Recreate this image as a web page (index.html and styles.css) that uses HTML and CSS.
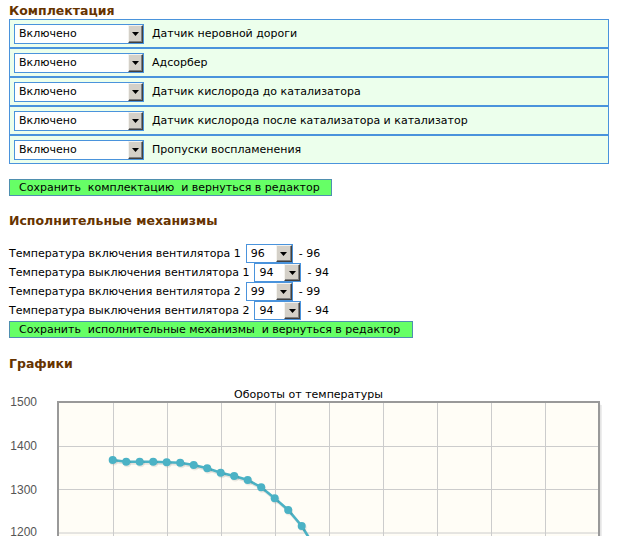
FILE: index.html
```html
<!DOCTYPE html>
<html lang="ru">
<head>
<meta charset="utf-8">
<title>Комплектация</title>
<link rel="stylesheet" href="styles.css">
</head>
<body>
<div class="page">
  <h2 class="heading">Комплектация</h2>
  <div class="kit">
    <div class="kit-row">
      <span class="sel sel-wide"><span class="sel-val">Включено</span><span class="sel-btn"><svg width="7" height="4" viewBox="0 0 7 4"><path d="M0 0H7L3.5 4Z" fill="#000"/></svg></span></span>
      <span class="kit-label">Датчик неровной дороги</span>
    </div>
    <div class="kit-row">
      <span class="sel sel-wide"><span class="sel-val">Включено</span><span class="sel-btn"><svg width="7" height="4" viewBox="0 0 7 4"><path d="M0 0H7L3.5 4Z" fill="#000"/></svg></span></span>
      <span class="kit-label">Адсорбер</span>
    </div>
    <div class="kit-row">
      <span class="sel sel-wide"><span class="sel-val">Включено</span><span class="sel-btn"><svg width="7" height="4" viewBox="0 0 7 4"><path d="M0 0H7L3.5 4Z" fill="#000"/></svg></span></span>
      <span class="kit-label">Датчик кислорода до катализатора</span>
    </div>
    <div class="kit-row">
      <span class="sel sel-wide"><span class="sel-val">Включено</span><span class="sel-btn"><svg width="7" height="4" viewBox="0 0 7 4"><path d="M0 0H7L3.5 4Z" fill="#000"/></svg></span></span>
      <span class="kit-label">Датчик кислорода после катализатора и катализатор</span>
    </div>
    <div class="kit-row">
      <span class="sel sel-wide"><span class="sel-val">Включено</span><span class="sel-btn"><svg width="7" height="4" viewBox="0 0 7 4"><path d="M0 0H7L3.5 4Z" fill="#000"/></svg></span></span>
      <span class="kit-label">Пропуски воспламенения</span>
    </div>
  </div>
  <button class="btn btn-kit" type="button">Сохранить&nbsp; комплектацию&nbsp; и вернуться в редактор</button>

  <h2 class="heading heading-mech">Исполнительные механизмы</h2>
  <div class="mech">
    <div class="mech-row"><span class="mech-label">Температура включения вентилятора 1</span><span class="sel sel-small"><span class="sel-val">96</span><span class="sel-btn"><svg width="7" height="4" viewBox="0 0 7 4"><path d="M0 0H7L3.5 4Z" fill="#000"/></svg></span></span><span class="mech-val">- 96</span></div>
    <div class="mech-row"><span class="mech-label">Температура выключения вентилятора 1</span><span class="sel sel-small"><span class="sel-val">94</span><span class="sel-btn"><svg width="7" height="4" viewBox="0 0 7 4"><path d="M0 0H7L3.5 4Z" fill="#000"/></svg></span></span><span class="mech-val">- 94</span></div>
    <div class="mech-row"><span class="mech-label">Температура включения вентилятора 2</span><span class="sel sel-small"><span class="sel-val">99</span><span class="sel-btn"><svg width="7" height="4" viewBox="0 0 7 4"><path d="M0 0H7L3.5 4Z" fill="#000"/></svg></span></span><span class="mech-val">- 99</span></div>
    <div class="mech-row"><span class="mech-label">Температура выключения вентилятора 2</span><span class="sel sel-small"><span class="sel-val">94</span><span class="sel-btn"><svg width="7" height="4" viewBox="0 0 7 4"><path d="M0 0H7L3.5 4Z" fill="#000"/></svg></span></span><span class="mech-val">- 94</span></div>
  </div>
  <button class="btn btn-mech" type="button">Сохранить&nbsp; исполнительные механизмы&nbsp; и вернуться в редактор</button>

  <h2 class="heading heading-graph">Графики</h2>
  <svg class="chart" width="608" height="151" viewBox="0 0 608 151">
    <text class="chart-title" x="299.5" y="13" text-anchor="middle">Обороты от температуры</text>
    <rect x="52" y="20" width="541" height="200" fill="#000" opacity="0.07"/>
    <rect x="50.5" y="18.5" width="541" height="200" fill="#000" opacity="0.07"/>
    <rect x="49" y="17" width="541" height="200" fill="#fffdf6"/>
    <g stroke="#cccccc" stroke-width="1">
      <path d="M49 61.5H590M49 104.5H590M49 148H590"/>
      <path d="M104.5 17V220M158.5 17V220M212.5 17V220M266.5 17V220M320.5 17V220M374.5 17V220M428.5 17V220M482.5 17V220M536.5 17V220"/>
    </g>
    <rect x="49" y="17" width="541" height="200" fill="none" stroke="#999999" stroke-width="2"/>
    <g class="axis" text-anchor="end">
      <text x="28" y="21">1500</text>
      <text x="28" y="65">1400</text>
      <text x="28" y="109">1300</text>
      <text x="28" y="151">1200</text>
    </g>
    <polyline fill="none" stroke="#000" stroke-opacity="0.1" stroke-width="3" transform="translate(1,1.5)" points="103.7,75 117.2,76.7 130.7,76.7 144.2,76.7 157.7,77.3 171.2,77.7 184.7,80 198.2,83.3 211.7,87.7 225.2,91 238.7,95 252.2,102.3 265.7,113.3 279.2,125 292.7,141 306.2,163"/>
    <polyline fill="none" stroke="#4bb2c5" stroke-width="2.5" points="103.7,75 117.2,76.7 130.7,76.7 144.2,76.7 157.7,77.3 171.2,77.7 184.7,80 198.2,83.3 211.7,87.7 225.2,91 238.7,95 252.2,102.3 265.7,113.3 279.2,125 292.7,141 306.2,163"/>
    <g fill="#000" fill-opacity="0.08" transform="translate(1,1.5)">
      <circle cx="103.7" cy="75" r="4"/><circle cx="117.2" cy="76.7" r="4"/><circle cx="130.7" cy="76.7" r="4"/><circle cx="144.2" cy="76.7" r="4"/><circle cx="157.7" cy="77.3" r="4"/><circle cx="171.2" cy="77.7" r="4"/><circle cx="184.7" cy="80" r="4"/><circle cx="198.2" cy="83.3" r="4"/><circle cx="211.7" cy="87.7" r="4"/><circle cx="225.2" cy="91" r="4"/><circle cx="238.7" cy="95" r="4"/><circle cx="252.2" cy="102.3" r="4"/><circle cx="265.7" cy="113.3" r="4"/><circle cx="279.2" cy="125" r="4"/><circle cx="292.7" cy="141" r="4"/>
    </g>
    <g fill="#4bb2c5">
      <circle cx="103.7" cy="75" r="4"/><circle cx="117.2" cy="76.7" r="4"/><circle cx="130.7" cy="76.7" r="4"/><circle cx="144.2" cy="76.7" r="4"/><circle cx="157.7" cy="77.3" r="4"/><circle cx="171.2" cy="77.7" r="4"/><circle cx="184.7" cy="80" r="4"/><circle cx="198.2" cy="83.3" r="4"/><circle cx="211.7" cy="87.7" r="4"/><circle cx="225.2" cy="91" r="4"/><circle cx="238.7" cy="95" r="4"/><circle cx="252.2" cy="102.3" r="4"/><circle cx="265.7" cy="113.3" r="4"/><circle cx="279.2" cy="125" r="4"/><circle cx="292.7" cy="141" r="4"/>
    </g>
  </svg>
</div>
</body>
</html>
```

FILE: styles.css
```css
html, body {
  margin: 0;
  padding: 0;
  background: #ffffff;
  overflow: hidden;
}

body {
  font-family: "DejaVu Sans", Verdana, sans-serif;
  font-size: 11px;
  color: #000000;
}

.page {
  width: 600px;
  padding: 3px 9px 0;
}

.heading {
  margin: 0;
  font-family: "DejaVu Sans", Verdana, sans-serif;
  font-weight: bold;
  font-size: 12.5px;
  line-height: 16px;
  color: #663300;
}

.heading-mech {
  margin-top: 17px;
}

.heading-graph {
  margin-top: 18px;
}

/* ---- kit list ---- */
.kit {
  display: flex;
  flex-direction: column;
}

.kit-row {
  display: flex;
  align-items: flex-start;
  gap: 8px;
  height: 20px;
  padding: 4px 4px 3px;
  border: 1px solid #4a93dc;
  background: #ecffec;
}

.kit-label {
  line-height: 20px;
}

/* ---- fake select ---- */
.sel {
  display: inline-flex;
  align-items: stretch;
  box-sizing: border-box;
  border: 1px solid #4a93dc;
  background: #ffffff;
  flex-shrink: 0;
}

.sel-wide {
  width: 130px;
  height: 20px;
}

.sel-small {
  width: 47px;
  height: 19px;
}

.sel-val {
  flex: 1;
  padding-left: 4px;
  line-height: 18px;
  white-space: nowrap;
}

.sel-small .sel-val {
  line-height: 17px;
}

.sel-btn {
  box-sizing: border-box;
  width: 15px;
  display: flex;
  align-items: center;
  justify-content: center;
  background: #d4d0c8;
  border-top: 1px solid #f4f3ef;
  border-left: 1px solid #f4f3ef;
  border-right: 1px solid #404040;
  border-bottom: 1px solid #404040;
  box-shadow: inset -1px -1px 0 #808080;
}

.sel-small .sel-btn {
  width: 16px;
}

/* ---- buttons ---- */
.btn {
  display: block;
  box-sizing: border-box;
  height: 17px;
  margin: 0;
  padding: 0 0 0 9px;
  border: 1px solid #4f8faf;
  background: #66ff66;
  font-family: "DejaVu Sans", Verdana, sans-serif;
  font-size: 11px;
  line-height: 15px;
  color: #000000;
  text-align: left;
  white-space: nowrap;
}

.btn-kit {
  width: 323px;
  margin-top: 15px;
}

.btn-mech {
  width: 404px;
  margin-top: 1px;
}

/* ---- mech rows ---- */
.mech {
  display: flex;
  flex-direction: column;
  margin-top: 15px;
}

.mech-row {
  display: flex;
  align-items: center;
  height: 19px;
  white-space: nowrap;
}

.mech-label {
  margin-right: 5px;
}

.mech-val {
  margin-left: 6px;
}

/* ---- chart ---- */
.chart {
  display: block;
  margin-top: 13px;
}

.chart-title {
  font-family: "DejaVu Sans", Verdana, sans-serif;
  font-size: 11px;
  fill: #000000;
}

.axis text {
  font-family: "Liberation Sans", Arial, sans-serif;
  font-size: 12px;
  fill: #555555;
}
```
